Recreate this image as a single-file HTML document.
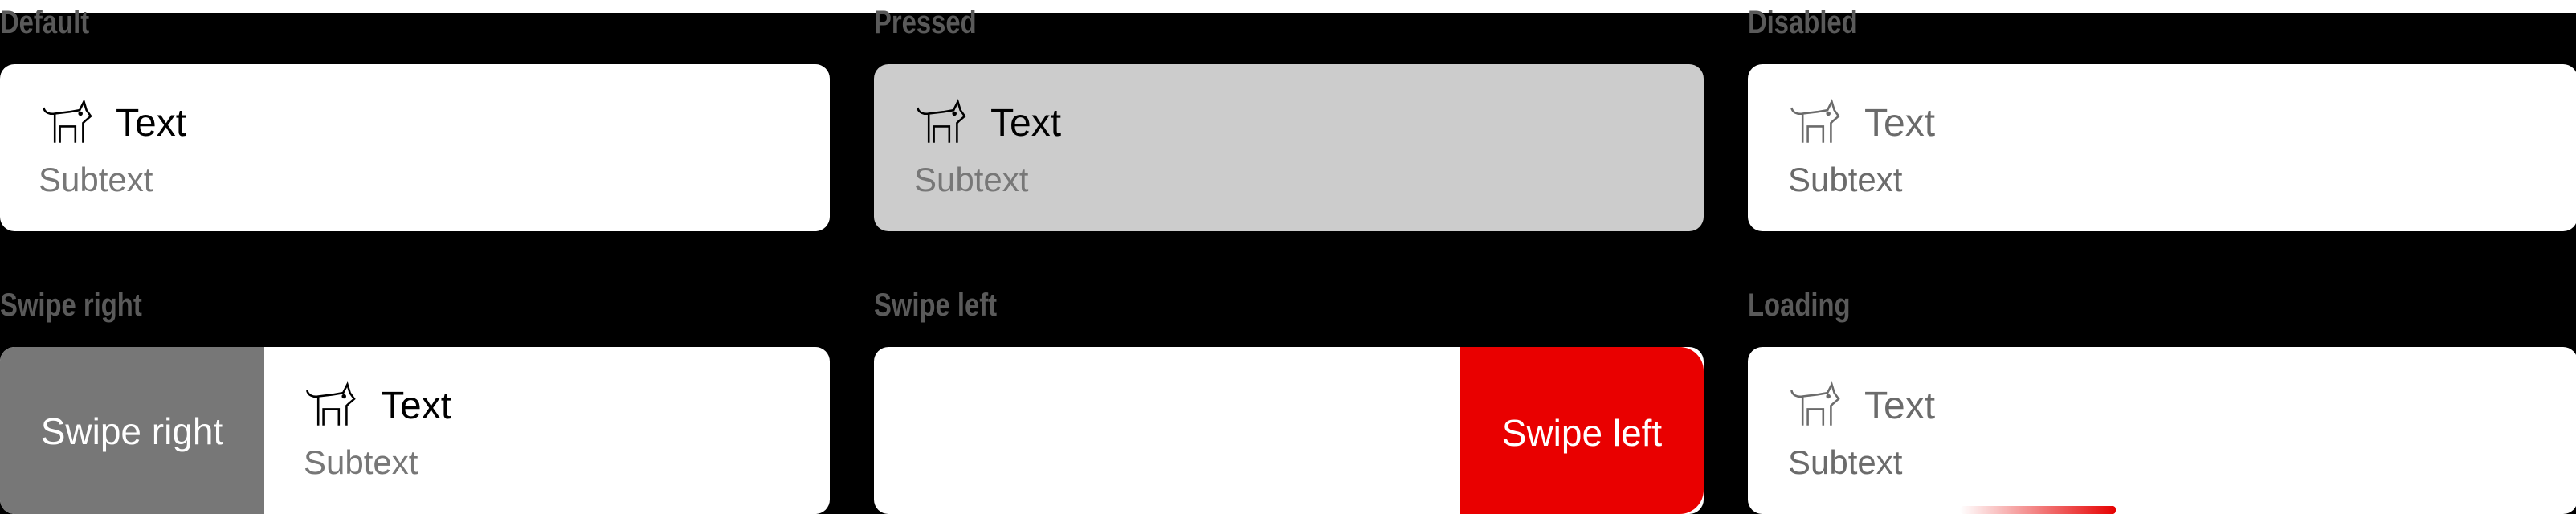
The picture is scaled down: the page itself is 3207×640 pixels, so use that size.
<!DOCTYPE html>
<html><head><meta charset="utf-8">
<style>
html,body{margin:0;padding:0;}
body{width:3207px;height:636px;background:#000;position:relative;overflow:hidden;font-family:"Liberation Sans",Arial,sans-serif;}
.strip{position:absolute;left:0;top:0;width:3207px;height:16px;background:#fff;}
.lbl{position:absolute;font-weight:bold;font-size:40px;color:#5a5a5a;line-height:40px;transform:scaleX(0.82);transform-origin:0 0;}
.card{position:absolute;width:1033px;height:208px;background:#fff;border-radius:18px;overflow:hidden;}
.icon{position:absolute;width:86px;height:64px;}
.t{position:absolute;font-size:48px;line-height:48px;color:#000;}
.s{position:absolute;font-size:42px;line-height:42px;color:#777;}
.dis .t,.dis .s{color:#6b6b6b;}
</style></head><body>
<div class="strip"></div>

<svg width="0" height="0" style="position:absolute">
<defs>
<g id="dog" fill="none" stroke-width="2.4" stroke-linejoin="miter">
<path d="M15 15 C16 21 22 23 28 22 L45 20 L57 18 L62 8 L65 18 L70 25 L63 31 L61 33 L61 56"/>
<path d="M28 22 L28 56"/>
<path d="M34 56 L34 37 L52 37 L52 56"/>
</g>
</defs>
</svg>

<div class="lbl" style="left:0;top:8px;">Default</div>
<div class="lbl" style="left:1088px;top:8px;">Pressed</div>
<div class="lbl" style="left:2176px;top:8px;">Disabled</div>
<div class="lbl" style="left:0;top:360px;">Swipe right</div>
<div class="lbl" style="left:1088px;top:360px;">Swipe left</div>
<div class="lbl" style="left:2176px;top:360px;">Loading</div>

<div class="card" style="left:0;top:80px;">
  <svg class="icon" style="left:38px;top:38px" viewBox="0 0 80 60"><use href="#dog" stroke="#000"/><circle cx="58" cy="22" r="2.6" fill="#000"/></svg>
  <div class="t" style="left:144px;top:50px;">Text</div>
  <div class="s" style="left:48px;top:123px;">Subtext</div>
</div>
<div class="card" style="left:1088px;top:80px;background:#cccccc;">
  <svg class="icon" style="left:38px;top:38px" viewBox="0 0 80 60"><use href="#dog" stroke="#000"/><circle cx="58" cy="22" r="2.6" fill="#000"/></svg>
  <div class="t" style="left:145px;top:50px;">Text</div>
  <div class="s" style="left:50px;top:123px;color:#777;">Subtext</div>
</div>
<div class="card dis" style="left:2176px;top:80px;">
  <svg class="icon" style="left:38px;top:38px" viewBox="0 0 80 60"><use href="#dog" stroke="#6b6b6b"/><circle cx="58" cy="22" r="2.6" fill="#6b6b6b"/></svg>
  <div class="t" style="left:145px;top:50px;">Text</div>
  <div class="s" style="left:50px;top:123px;">Subtext</div>
</div>

<div class="card" style="left:0;top:432px;">
  <div style="position:absolute;left:0;top:0;width:329px;height:208px;background:#777;"></div>
  <div style="position:absolute;left:0;top:82px;width:329px;text-align:center;font-size:46px;line-height:46px;color:#fff;">Swipe right</div>
  <svg class="icon" style="left:366px;top:38px" viewBox="0 0 80 60"><use href="#dog" stroke="#000"/><circle cx="58" cy="22" r="2.6" fill="#000"/></svg>
  <div class="t" style="left:474px;top:50px;">Text</div>
  <div class="s" style="left:378px;top:123px;">Subtext</div>
</div>
<div class="card" style="left:1088px;top:432px;">
  <div style="position:absolute;left:730px;top:0;width:303px;height:208px;background:#e90000;border-radius:0 30px 30px 0;"></div>
  <div style="position:absolute;left:730px;top:84px;width:303px;text-align:center;font-size:46px;line-height:46px;color:#fff;">Swipe left</div>
</div>
<div class="card dis" style="left:2176px;top:432px;">
  <svg class="icon" style="left:38px;top:38px" viewBox="0 0 80 60"><use href="#dog" stroke="#6b6b6b"/><circle cx="58" cy="22" r="2.6" fill="#6b6b6b"/></svg>
  <div class="t" style="left:145px;top:50px;">Text</div>
  <div class="s" style="left:50px;top:123px;">Subtext</div>
  <div style="position:absolute;left:264px;top:198px;width:194px;height:10px;border-radius:4px;background:linear-gradient(to right,rgba(230,0,0,0),#e60000);"></div>
</div>
</body></html>
